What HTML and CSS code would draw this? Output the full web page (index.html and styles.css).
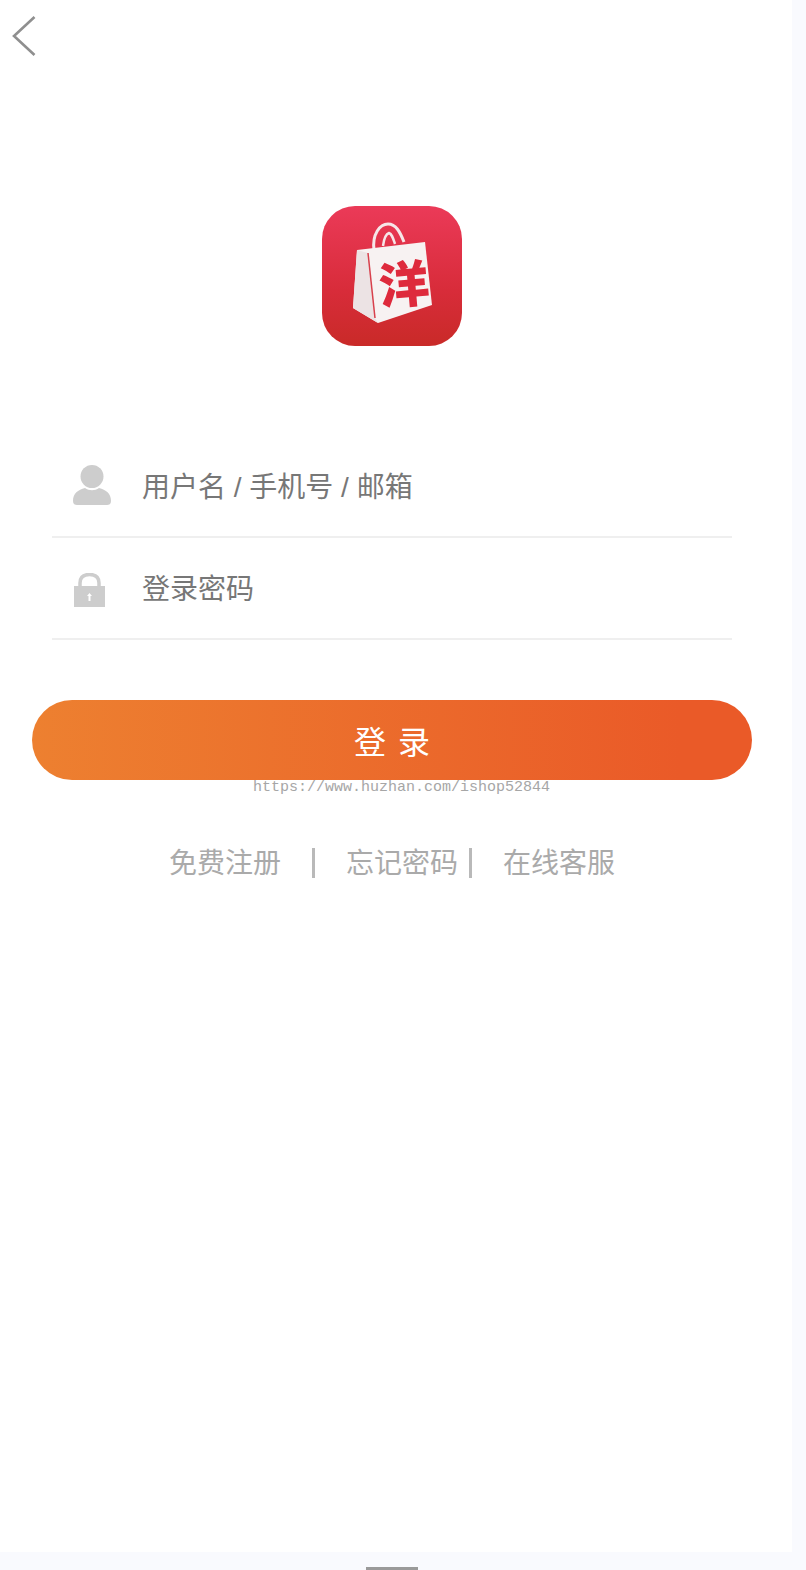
FILE: index.html
```html
<!DOCTYPE html>
<html lang="zh-CN">
<head>
  <meta charset="UTF-8">
  <meta name="viewport" content="width=device-width, initial-scale=1.0">
  <title>登录</title>
  <link rel="stylesheet" href="styles.css">
</head>
<body>

  <div class="page">
    <a class="back" href="#">
      <svg width="24" height="42" viewBox="0 0 24 42"><path d="M22.500 2 L2 21 L22.500 40" fill="none" stroke="#8f8f8f" stroke-width="2.600"/></svg>
    </a>

    <!-- logo -->
    <div class="logo">
      <svg width="140" height="140" viewBox="0 0 140 140">
        <defs>
          <linearGradient id="logoBg" x1="0" y1="0" x2="0" y2="1">
            <stop offset="0" stop-color="#eb3a58"/>
            <stop offset="0.6" stop-color="#d82c3a"/>
            <stop offset="1" stop-color="#c92a28"/>
          </linearGradient>
        </defs>
        <rect width="140" height="140" rx="33" fill="url(#logoBg)"/>
        <path d="M52 44 C50 28 58 18 66 18 C74 18 78 26 82 36" fill="none" stroke="#f6e6e8" stroke-width="3"/>
        <path d="M61 40 C62 32 64 28 67 27 C70 28 71 32 73 38" fill="none" stroke="#f6e6e8" stroke-width="2.500"/>
        <path d="M35 44 L103 36 L110 99 L56 117 L31 102 Z" fill="#f7f2f2"/>
        <path d="M35 44 L46 47 L53 112 L56 117 L31 102 Z" fill="#ece3e4"/>
        <path d="M46 47 L53 112" fill="none" stroke="#d8404c" stroke-width="1.500"/>
        <text x="82" y="97" class="logo-char" transform="rotate(-5 82 79)">洋</text>
      </svg>
    </div>

    <form class="login-form">
      <div class="field">
        <svg class="field-icon" width="38" height="40" viewBox="0 0 38 40">
          <circle cx="19" cy="11.500" r="11.500" fill="#cdcdcd"/>
          <path d="M0 36 C0 28 5 25 12 23 C16 26 22 26 26 23 C33 25 38 28 38 36 C38 39 36 40 34 40 L4 40 C2 40 0 39 0 36 Z" fill="#cdcdcd"/>
        </svg>
        <span class="placeholder">用户名 / 手机号 / 邮箱</span>
      </div>
      <div class="field field-pass">
        <svg class="field-icon" width="38" height="34" viewBox="0 0 38 34">
          <path d="M7 14 V10 C7 4 11 1.500 16.500 1.500 C22 1.500 26 4 26 10 V14" fill="none" stroke="#cdcdcd" stroke-width="3.500"/>
          <rect x="1" y="13" width="31" height="21" fill="#cdcdcd"/>
          <path d="M15.500 28 V23 H14 L16.500 20 L19 23 H17.500 V28 Z" fill="#fff"/>
        </svg>
        <span class="placeholder">登录密码</span>
      </div>

      <div class="submit-wrap">
        <button type="button" class="submit">登录</button>
        <span class="watermark">https://www.huzhan.com/ishop52844</span>
      </div>
    </form>

    <div class="links">
      <a href="#">免费注册</a>
      <i class="sep sep-wide"></i>
      <a href="#">忘记密码</a>
      <i class="sep"></i>
      <a href="#">在线客服</a>
    </div>
  </div>

  <div class="home-bar"></div>

</body>
</html>
```

FILE: styles.css
```css
* {
  margin: 0;
  padding: 0;
  box-sizing: border-box;
  font-family: "Liberation Sans", "Noto Sans CJK SC", sans-serif;
}

body {
  height: 1570px;
  overflow: hidden;
  background: #f9fafe;
}

.page {
  width: 792px;
  height: 1552px;
  background: #fff;
  display: flex;
  flex-direction: column;
}

.back {
  display: block;
  height: 56px;
  padding: 15px 0 0 12px;
}

.logo {
  display: flex;
  justify-content: center;
  margin-top: 150px;
  padding-right: 8px;
  height: 140px;
}

.logo-char {
  font-size: 50px;
  font-weight: 900;
  fill: #de2a3c;
  text-anchor: middle;
  font-family: "Noto Sans CJK SC", sans-serif;
}

.login-form {
  margin-top: 91px;
  padding: 0 40px 0 32px;
}

.field {
  display: flex;
  align-items: center;
  height: 101px;
  margin: 0 20px;
  padding-left: 21px;
  padding-bottom: 4px;
  border-bottom: 2px solid #efefef;
}

.field-pass {
  height: 102px;
  padding-bottom: 3px;
}

.field-pass .field-icon {
  margin-top: 7px;
}

.field-icon {
  flex: none;
}

.placeholder {
  margin-left: 31px;
  font-size: 28px;
  color: #777;
}

.submit-wrap {
  position: relative;
  margin-top: 60px;
}

.submit {
  display: block;
  width: 100%;
  height: 80px;
  border: none;
  border-radius: 40px;
  background: linear-gradient(90deg, #ed8030, #ea5a28 90%);
  color: #fff;
  font-size: 32px;
  letter-spacing: 12px;
  padding-left: 12px;
}

.watermark {
  position: absolute;
  left: 221px;
  top: 79px;
  font-family: "Liberation Mono", monospace;
  font-size: 15px;
  color: #a6a6a6;
  white-space: nowrap;
}

.links {
  display: flex;
  justify-content: center;
  align-items: center;
  margin-top: 61px;
  padding-right: 8px;
  font-size: 28px;
}

.links a {
  color: #aaa;
  text-decoration: none;
}

.sep {
  width: 3px;
  height: 30px;
  margin: 3px 31px 0 11px;
  background: #b9b9b9;
}

.sep-wide {
  margin: 3px 31px 0;
}

.home-bar {
  width: 52px;
  height: 3px;
  margin: 15px 0 0 366px;
  background: #9a9a9a;
}
```
